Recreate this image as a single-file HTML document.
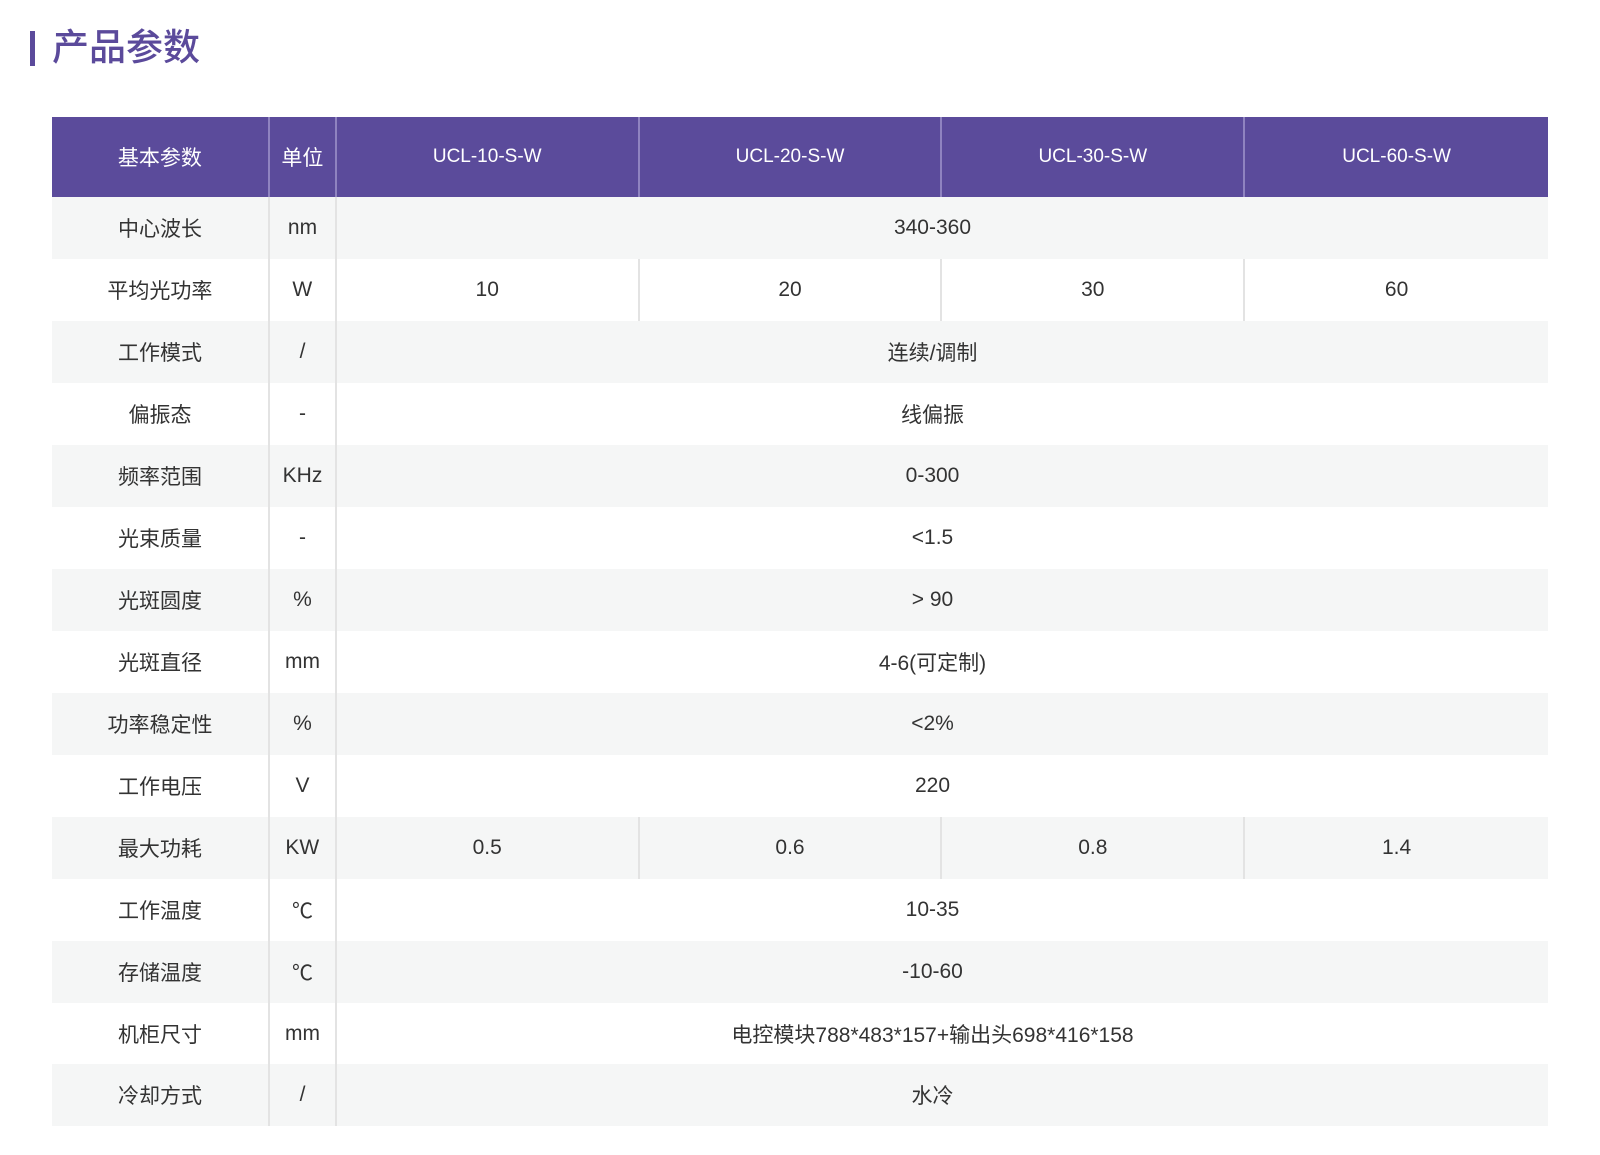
<!DOCTYPE html>
<html><head><meta charset="utf-8"><style>
body{margin:0;width:1600px;height:1155px;background:#fff;font-family:"Liberation Sans","Noto Sans CJK SC",sans-serif;position:relative;overflow:hidden}
.bar{position:absolute;left:30px;top:31px;width:5px;height:35px;background:#5b4a9b}
.title{position:absolute;left:52px;top:23px;font-size:37px;color:#5b4a9b;font-weight:500;line-height:50px}
.r{position:absolute;left:52px;width:1496px;display:flex}
.r div{display:flex;align-items:center;justify-content:center;box-sizing:border-box;height:100%}
.h{top:117px;height:80px;background:#5b4b9b;color:#fff;font-size:19px}
.h .c1,.h .c2{font-size:21px}
.h div{border-right:2px solid #8f83c0}
.h div:last-child{border-right:none}
.b{font-size:21px;color:#333;height:62px}
.g{background:#f5f6f6}
.c1{width:218px;border-right:2px solid #e3e3e3}
.c2{width:67px;border-right:2px solid #e3e3e3}
.cd{width:303px;border-right:2px solid #e3e3e3}
.cd:last-child{border-right:none}
.cs{width:1211px;padding-right:20px}
</style></head><body>
<div class="bar"></div><div class="title">产品参数</div>
<div class="r h"><div class="c1">基本参数</div><div class="c2">单位</div><div class="cd">UCL-10-S-W</div><div class="cd">UCL-20-S-W</div><div class="cd">UCL-30-S-W</div><div class="cd">UCL-60-S-W</div></div>
<div class="r b g" style="top:197px"><div class="c1">中心波长</div><div class="c2">nm</div><div class="cs">340-360</div></div>
<div class="r b" style="top:259px"><div class="c1">平均光功率</div><div class="c2">W</div><div class="cd">10</div><div class="cd">20</div><div class="cd">30</div><div class="cd">60</div></div>
<div class="r b g" style="top:321px"><div class="c1">工作模式</div><div class="c2">/</div><div class="cs">连续/调制</div></div>
<div class="r b" style="top:383px"><div class="c1">偏振态</div><div class="c2">-</div><div class="cs">线偏振</div></div>
<div class="r b g" style="top:445px"><div class="c1">频率范围</div><div class="c2">KHz</div><div class="cs">0-300</div></div>
<div class="r b" style="top:507px"><div class="c1">光束质量</div><div class="c2">-</div><div class="cs">&lt;1.5</div></div>
<div class="r b g" style="top:569px"><div class="c1">光斑圆度</div><div class="c2">%</div><div class="cs">&gt; 90</div></div>
<div class="r b" style="top:631px"><div class="c1">光斑直径</div><div class="c2">mm</div><div class="cs">4-6(可定制)</div></div>
<div class="r b g" style="top:693px"><div class="c1">功率稳定性</div><div class="c2">%</div><div class="cs">&lt;2%</div></div>
<div class="r b" style="top:755px"><div class="c1">工作电压</div><div class="c2">V</div><div class="cs">220</div></div>
<div class="r b g" style="top:817px"><div class="c1">最大功耗</div><div class="c2">KW</div><div class="cd">0.5</div><div class="cd">0.6</div><div class="cd">0.8</div><div class="cd">1.4</div></div>
<div class="r b" style="top:879px"><div class="c1">工作温度</div><div class="c2">℃</div><div class="cs">10-35</div></div>
<div class="r b g" style="top:941px"><div class="c1">存储温度</div><div class="c2">℃</div><div class="cs">-10-60</div></div>
<div class="r b" style="top:1003px"><div class="c1">机柜尺寸</div><div class="c2">mm</div><div class="cs">电控模块788*483*157+输出头698*416*158</div></div>
<div class="r b g" style="top:1064px"><div class="c1">冷却方式</div><div class="c2">/</div><div class="cs">水冷</div></div>
</body></html>
